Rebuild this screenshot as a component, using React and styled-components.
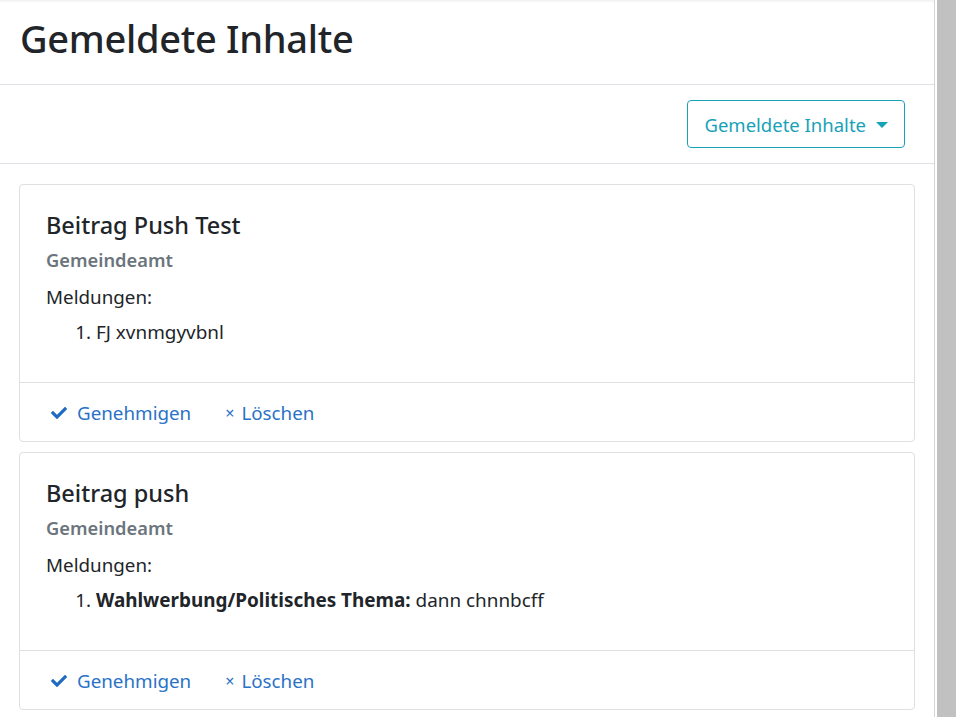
import React from 'react';
import styled, { createGlobalStyle } from 'styled-components';
import { FaCheck } from 'react-icons/fa';

const GlobalStyle = createGlobalStyle`
  html, body {
    margin: 0;
    padding: 0;
    height: 100%;
    background: #fff;
  }
  body {
    font-family: "Noto Sans", "Open Sans", sans-serif;
    color: #212529;
    overflow: hidden;
  }
  #root {
    height: 100%;
  }
`;

const Frame = styled.div`
  display: flex;
  height: 717px;
`;

const Content = styled.main`
  flex: 0 0 934px;
  border-right: 1px solid #d4d4d4;
  box-shadow: inset 0 3px 3px -2px rgba(0, 0, 0, 0.08);
  overflow: hidden;
`;

const ScrollRail = styled.div`
  flex: 1;
  margin-left: 2px;
  background: #c1c1c1;
`;

const PageHeader = styled.header`
  height: 84px;
  padding: 0 20px;
  display: flex;
  align-items: center;
  border-bottom: 1px solid #dee2e6;
`;

const Title = styled.h1`
  margin: 0 0 6px;
  font-size: 38px;
  font-weight: 500;
  line-height: 1.2;
  letter-spacing: -0.3px;
`;

const Toolbar = styled.div`
  height: 78px;
  padding: 0 29px 0 20px;
  display: flex;
  align-items: center;
  justify-content: flex-end;
  border-bottom: 1px solid #dee2e6;
`;

const DropdownButton = styled.button`
  height: 48px;
  padding: 1px 16px 0;
  display: flex;
  align-items: center;
  gap: 10px;
  font-family: inherit;
  font-size: 18.5px;
  color: #17a2b8;
  background: #fff;
  border: 1px solid #17a2b8;
  border-radius: 4px;
  cursor: pointer;
`;

const Caret = styled.span`
  width: 0;
  height: 0;
  border-left: 6px solid transparent;
  border-right: 6px solid transparent;
  border-top: 6px solid #17a2b8;
  margin-top: 1px;
`;

const CardList = styled.div`
  padding: 20px 19px;
  display: flex;
  flex-direction: column;
  gap: 10px;
`;

const Card = styled.article`
  border: 1px solid #dfdfdf;
  border-radius: 4px;
  background: #fff;
`;

const CardBody = styled.div`
  height: 197px;
  box-sizing: border-box;
  padding: 25px 26px 0;
`;

const CardTitle = styled.h5`
  margin: 0 0 9px;
  font-size: 23.5px;
  font-weight: 500;
  line-height: 30px;
`;

const CardSubtitle = styled.h6`
  margin: 0 0 11px;
  font-size: 18.3px;
  font-weight: 600;
  color: #6c757d;
  line-height: 22px;
`;

const Label = styled.p`
  margin: 0 0 5px;
  font-size: 18.8px;
  line-height: 30px;
`;

const ReportList = styled.ol`
  margin: 0;
  padding-left: 50px;
  font-size: 18.9px;
  line-height: 30px;
`;

const CardFooter = styled.div`
  height: 59px;
  padding: 2px 31px 0;
  box-sizing: border-box;
  display: flex;
  align-items: center;
  gap: 34px;
  border-top: 1px solid #dfdfdf;
`;

const ActionLink = styled.a`
  display: flex;
  align-items: center;
  gap: ${(p) => p.$gap || 10}px;
  font-size: 18.8px;
  color: #2a72c6;
  text-decoration: none;
  cursor: pointer;

  svg {
    font-size: 16px;
    color: #1f6ac2;
  }
`;

const Times = styled.span`
  font-size: 16px;
`;

const reports = [
  {
    title: 'Beitrag Push Test',
    source: 'Gemeindeamt',
    items: [{ text: 'FJ xvnmgyvbnl' }],
  },
  {
    title: 'Beitrag push',
    source: 'Gemeindeamt',
    items: [{ category: 'Wahlwerbung/Politisches Thema:', text: 'dann chnnbcff' }],
  },
];

const ReportCard = ({ report }) => (
  <Card>
    <CardBody>
      <CardTitle>{report.title}</CardTitle>
      <CardSubtitle>{report.source}</CardSubtitle>
      <Label>Meldungen:</Label>
      <ReportList>
        {report.items.map((item, i) => (
          <li key={i}>
            {item.category && <strong>{item.category} </strong>}
            {item.text}
          </li>
        ))}
      </ReportList>
    </CardBody>
    <CardFooter>
      <ActionLink>
        <FaCheck />
        Genehmigen
      </ActionLink>
      <ActionLink $gap={7}>
        <Times>×</Times>
        Löschen
      </ActionLink>
    </CardFooter>
  </Card>
);

const App = () => (
  <>
    <GlobalStyle />
    <Frame>
      <Content>
        <PageHeader>
          <Title>Gemeldete Inhalte</Title>
        </PageHeader>
        <Toolbar>
          <DropdownButton>
            Gemeldete Inhalte
            <Caret />
          </DropdownButton>
        </Toolbar>
        <CardList>
          {reports.map((r) => (
            <ReportCard key={r.title} report={r} />
          ))}
        </CardList>
      </Content>
      <ScrollRail />
    </Frame>
  </>
);

export default App;
